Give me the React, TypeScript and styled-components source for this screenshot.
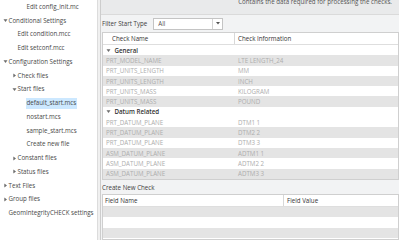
import styled, { createGlobalStyle } from "styled-components";

const GlobalStyle = createGlobalStyle`
  html, body {
    margin: 0;
    padding: 0;
    background: #ffffff;
  }
  body {
    font-family: "Open Sans", "Liberation Sans", sans-serif;
    font-size: 6.2px;
    color: #3a3a3a;
  }
`;

type TreeNode = {
    label: string;
    level: number;
    arrow?: "open" | "closed";
    selected?: boolean;
};

const tree: TreeNode[] = [
    { label: "Edit config_init.mc", level: 2 },
    { label: "Conditional Settings", level: 0, arrow: "open" },
    { label: "Edit condition.mcc", level: 1 },
    { label: "Edit setconf.mcc", level: 1 },
    { label: "Configuration Settings", level: 0, arrow: "open" },
    { label: "Check files", level: 1, arrow: "closed" },
    { label: "Start files", level: 1, arrow: "open" },
    { label: "default_start.mcs", level: 2, selected: true },
    { label: "nostart.mcs", level: 2 },
    { label: "sample_start.mcs", level: 2 },
    { label: "Create new file", level: 2 },
    { label: "Constant files", level: 1, arrow: "closed" },
    { label: "Status files", level: 1, arrow: "closed" },
    { label: "Text Files", level: 0, arrow: "closed" },
    { label: "Group files", level: 0, arrow: "closed" },
    { label: "GeomIntegrityCHECK settings", level: 0 },
];

const groups = [
    {
        name: "General",
        rows: [
            ["PRT_MODEL_NAME", "LTE LENGTH_24"],
            ["PRT_UNITS_LENGTH", "MM"],
            ["PRT_UNITS_LENGTH", "INCH"],
            ["PRT_UNITS_MASS", "KILOGRAM"],
            ["PRT_UNITS_MASS", "POUND"],
        ],
        startGrey: true,
    },
    {
        name: "Datum Related",
        rows: [
            ["PRT_DATUM_PLANE", "DTM1 1"],
            ["PRT_DATUM_PLANE", "DTM2 2"],
            ["PRT_DATUM_PLANE", "DTM3 3"],
            ["ASM_DATUM_PLANE", "ADTM1 1"],
            ["ASM_DATUM_PLANE", "ADTM2 2"],
            ["ASM_DATUM_PLANE", "ADTM3 3"],
        ],
        startGrey: false,
    },
];

function Arrow({ dir }: { dir: "open" | "closed" }) {
    return (
        <ArrowBox>
            <svg width="5" height="5" viewBox="0 0 5 5">
                {dir === "open"
                    ? <polygon points="0.5,1.2 4.5,1.2 2.5,4" fill="#6d6d6d" />
                    : <polygon points="1.3,0.6 4,2.5 1.3,4.4" fill="#6d6d6d" />}
            </svg>
        </ArrowBox>
    );
}

export default function App() {
    return (
        <>
            <GlobalStyle />
            <Frame>
                <Sidebar>
                    {tree.map((n, i) => (
                        <TreeRow key={i} $level={n.level}>
                            {n.arrow ? <Arrow dir={n.arrow} /> : <ArrowBox />}
                            <TreeLabel $selected={!!n.selected}>{n.label}</TreeLabel>
                        </TreeRow>
                    ))}
                </Sidebar>
                <Splitter />
                <Main>
                    <TopPanel>
                        <TopText>Contains the data required for processing the checks.</TopText>
                    </TopPanel>
                    <FilterRow>
                        <span>Filter Start Type</span>
                        <Select>
                            <SelectValue>All</SelectValue>
                            <SelectButton>
                                <svg width="4" height="3" viewBox="0 0 4 3">
                                    <polygon points="0,0 4,0 2,2.6" fill="#555" />
                                </svg>
                            </SelectButton>
                        </Select>
                    </FilterRow>
                    <Table>
                        <HeaderRow $first="131px">
                            <HeaderCell $pad="9px">Check Name</HeaderCell>
                            <HeaderCell $pad="3px">Check Information</HeaderCell>
                        </HeaderRow>
                        {groups.map((g) => (
                            <div key={g.name}>
                                <GroupRow>
                                    <Arrow dir="open" />
                                    <span>{g.name}</span>
                                </GroupRow>
                                {g.rows.map((r, i) => (
                                    <DataRow key={i} $grey={(i % 2 === 0) === g.startGrey}>
                                        <span>{r[0]}</span>
                                        <span>{r[1]}</span>
                                    </DataRow>
                                ))}
                            </div>
                        ))}
                    </Table>
                    <SectionTitle>Create New Check</SectionTitle>
                    <FieldTable>
                        <HeaderRow $first="180px">
                            <HeaderCell $pad="2px">Field Name</HeaderCell>
                            <HeaderCell $pad="3px">Field Value</HeaderCell>
                        </HeaderRow>
                        <FieldRow $grey />
                        <FieldRow />
                        <FieldRow $grey />
                    </FieldTable>
                </Main>
            </Frame>
        </>
    );
}

const Frame = styled.div`
    display: flex;
    width: 399px;
    height: 240px;
    overflow: hidden;
    background: #ffffff;
`;

const Sidebar = styled.nav`
    width: 97px;
    flex-shrink: 0;
    border-right: 1px solid #dcdcdc;
    background: #ffffff;
    display: flex;
    flex-direction: column;
`;

const TreeRow = styled.div<{ $level: number }>`
    height: 13.75px;
    display: flex;
    align-items: center;
    padding-left: ${({ $level }) => 3 + $level * 9}px;
    white-space: nowrap;
    color: #484848;
`;

const ArrowBox = styled.span`
    width: 5px;
    height: 5px;
    flex-shrink: 0;
    display: inline-flex;
    margin-right: 0.5px;
    svg { display: block; }
`;

const TreeLabel = styled.span<{ $selected: boolean }>`
    padding: 1.5px 1px;
    margin-left: -1px;
    line-height: 8px;
    background: ${({ $selected }) => $selected ? "#cce8ff" : "transparent"};
`;

const Splitter = styled.div`
    width: 2px;
    flex-shrink: 0;
    background: #f0f0f0;
`;

const Main = styled.section`
    flex: 1;
    min-width: 0;
    display: flex;
    flex-direction: column;
    border-left: 1px solid #cdcdcd;
    background: #f2f3f4;
`;

const TopPanel = styled.div`
    height: 14px;
    flex-shrink: 0;
    overflow: hidden;
    background: #e9eaeb;
    border-bottom: 1px solid #dadada;
    display: flex;
    justify-content: flex-end;
    padding-right: 7px;
`;

const TopText = styled.div`
    margin-top: -2px;
    line-height: 8px;
    color: #555;
    white-space: nowrap;
`;

const FilterRow = styled.div`
    height: 17px;
    flex-shrink: 0;
    display: flex;
    align-items: center;
    gap: 6px;
    padding-left: 1px;
    color: #404040;
    white-space: nowrap;
`;

const Select = styled.div`
    width: 70px;
    height: 12px;
    box-sizing: border-box;
    border: 1px solid #c4c4c4;
    background: #ffffff;
    display: flex;
    align-items: center;
`;

const SelectValue = styled.span`
    flex: 1;
    padding-left: 4px;
    color: #505050;
`;

const SelectButton = styled.span`
    width: 9px;
    height: 100%;
    border-left: 1px solid #d4d4d4;
    display: flex;
    align-items: center;
    justify-content: center;
`;

const Table = styled.div`
    margin-left: 1px;
    border: 1px solid #cfcfcf;
    background: #ffffff;
    flex-shrink: 0;
`;

const HeaderRow = styled.div<{ $first: string }>`
    display: grid;
    grid-template-columns: ${({ $first }) => $first} 1fr;
    height: 11px;
    border-bottom: 1px solid #dedede;
    background: #ffffff;
    color: #333;
`;

const HeaderCell = styled.div<{ $pad: string }>`
    display: flex;
    align-items: center;
    padding-left: ${({ $pad }) => $pad};
    white-space: nowrap;
    & + & {
        border-left: 1px solid #d8d8d8;
    }
`;

const GroupRow = styled.div`
    height: 10.3px;
    display: flex;
    align-items: center;
    gap: 3px;
    padding-left: 3px;
    font-weight: 600;
    color: #333;
`;

const DataRow = styled.div<{ $grey?: boolean }>`
    height: 10.3px;
    display: grid;
    grid-template-columns: 131px 1fr;
    align-items: center;
    padding-left: 3px;
    background: ${({ $grey }) => $grey ? "#e4e4e4" : "#ffffff"};
    color: #adadad;
    white-space: nowrap;
    span + span { padding-left: 1px; }
`;

const SectionTitle = styled.div`
    height: 13px;
    flex-shrink: 0;
    display: flex;
    align-items: center;
    padding-left: 1px;
    margin-top: 1px;
    color: #404040;
`;

const FieldTable = styled.div`
    margin-left: 1px;
    border: 1px solid #cfcfcf;
    background: #ffffff;
    flex: 1;
`;

const FieldRow = styled.div<{ $grey?: boolean }>`
    height: 10.5px;
    background: ${({ $grey }) => $grey ? "#e4e4e4" : "#ffffff"};
`;
